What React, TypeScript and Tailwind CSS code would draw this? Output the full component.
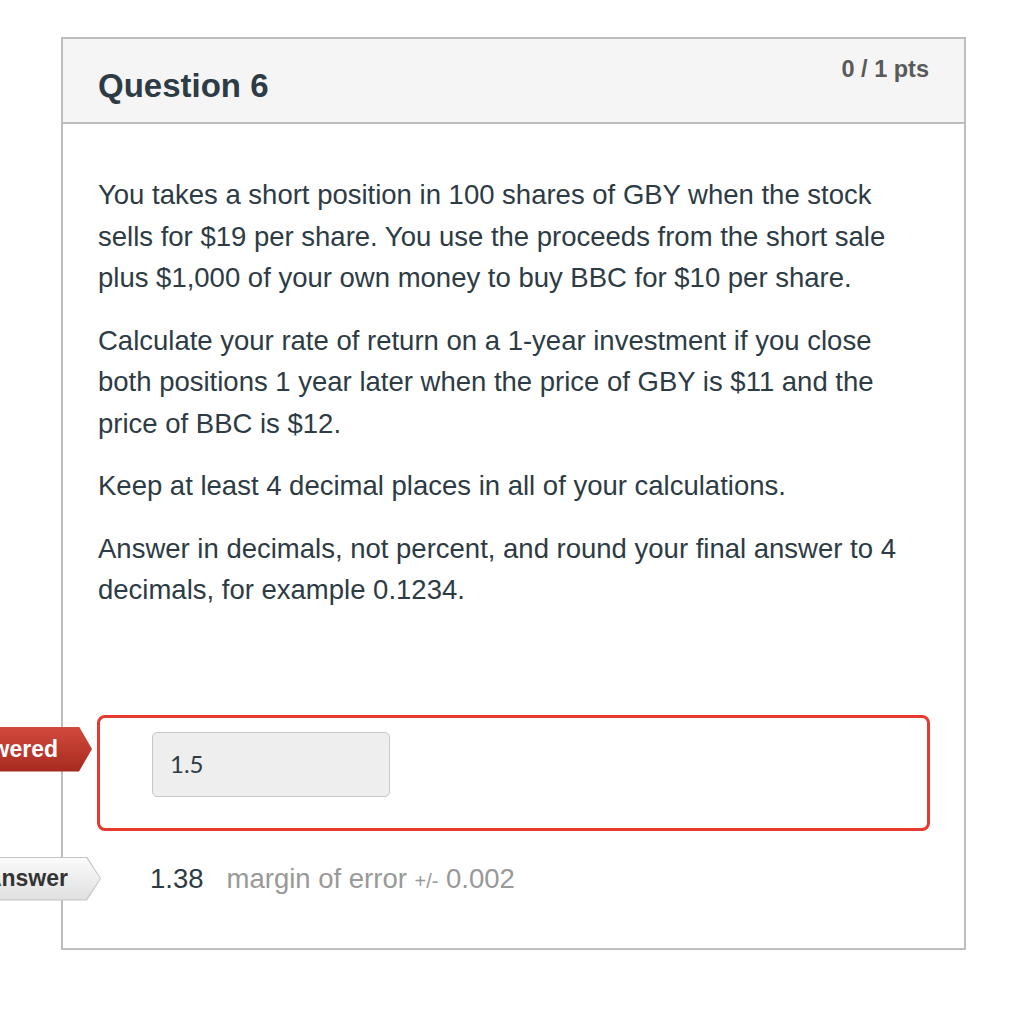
import React from "react";

const helv = { fontFamily: '"Liberation Sans", Arial, Helvetica, sans-serif' };

const paragraphs: string[][] = [
  [
    "You takes a short position in 100 shares of GBY when the stock",
    "sells for $19 per share. You use the proceeds from the short sale",
    "plus $1,000 of your own money to buy BBC for $10 per share.",
  ],
  [
    "Calculate your rate of return on a 1-year investment if you close",
    "both positions 1 year later when the price of GBY is $11 and the",
    "price of BBC is $12.",
  ],
  ["Keep at least 4 decimal places in all of your calculations."],
  [
    "Answer in decimals, not percent, and round your final answer to 4",
    "decimals, for example 0.1234.",
  ],
];

const App = () => {
  return (
    <div className="relative min-h-[1012px] w-[1024px] overflow-hidden bg-white pl-[61px] pt-[37px]" style={helv}>
      <div className="w-[905px] border-2 border-[#bdbdbd] bg-white">
        {/* header */}
        <div className="flex h-[85px] items-start justify-between border-b-2 border-[#bdbdbd] bg-[#f5f5f5] px-[35px]">
          <h2 className="mt-[30px] text-[33px] font-bold leading-[33px] text-[#2d3b45]">Question 6</h2>
          <div className="mt-[19px] text-[23.5px] font-bold leading-[23.5px] text-[#5a5a5a]">0 / 1 pts</div>
        </div>

        {/* body */}
        <div className="px-[35px] pb-[47px] pt-[50px]">
          <div className="flex flex-col gap-[21px] text-[27.5px] leading-[41.5px] text-[#2d3b45]">
            {paragraphs.map((lines, i) => (
              <p key={i} className="whitespace-nowrap">
                {lines.map((line, j) => (
                  <React.Fragment key={j}>
                    {line}
                    {j < lines.length - 1 && <br />}
                  </React.Fragment>
                ))}
              </p>
            ))}
          </div>

          {/* your answer */}
          <div className="relative -mx-px mt-[104px]">
            <div className="absolute right-[calc(100%_+_5px)] top-[12px] h-[45px] w-[260px] bg-linear-to-b from-[#d24b3c] to-[#a6291f] [clip-path:polygon(0_0,calc(100%_-_13px)_0,100%_50%,calc(100%_-_13px)_100%,0_100%)]">
              <div className="flex h-full items-center justify-end whitespace-nowrap pr-[34px] text-[23px] font-bold text-white">
                You Answered
              </div>
            </div>
            <div className="rounded-[8px] border-[3px] border-[#e8392e] pb-[31px] pl-[52px] pt-[14px]">
              <div
                className="flex h-[65px] w-[238px] items-center rounded-[5px] border border-[#c8c8c8] bg-[#eeeeee] pl-[17px] text-[24px] text-[#2d3b45]"
                style={{ fontFamily: 'Lato, "Open Sans", sans-serif' }}
              >
                1.5
              </div>
            </div>
          </div>

          {/* correct answer */}
          <div className="relative mt-[26px] flex h-[44px] items-center pl-[52px]">
            <div className="absolute right-[calc(100%_-_3px)] top-0 h-[44px] w-[260px] bg-[#c4c4c4] [clip-path:polygon(0_0,calc(100%_-_14px)_0,100%_50%,calc(100%_-_14px)_100%,0_100%)]">
              <div className="absolute inset-y-px left-0 right-px bg-linear-to-b from-[#fbfbfb] to-[#e0e0e0] [clip-path:polygon(0_0,calc(100%_-_14px)_0,100%_50%,calc(100%_-_14px)_100%,0_100%)]">
                <div className="flex h-full items-center justify-end whitespace-nowrap pr-[32px] text-[23px] font-bold text-[#333333]">
                  Correct Answer
                </div>
              </div>
            </div>
            <span className="text-[27.5px] text-[#2d3b45]">1.38</span>
            <span className="ml-[23px] text-[27.5px] text-[#999999]">
              margin of error <span className="text-[20px]">+/-</span> 0.002
            </span>
          </div>
        </div>
      </div>
    </div>
  );
};

export default App;
